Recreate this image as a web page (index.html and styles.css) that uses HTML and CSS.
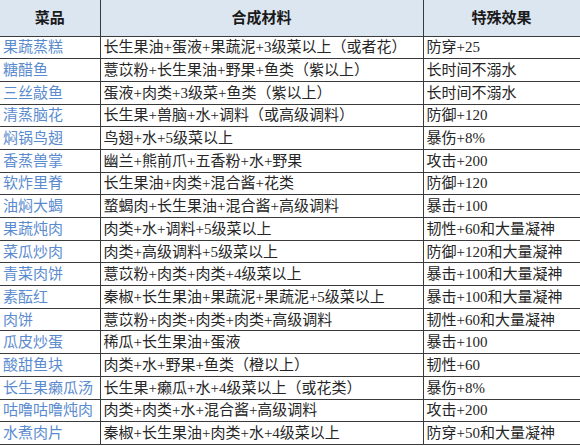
FILE: index.html
```html
<!DOCTYPE html>
<html lang="zh">
<head>
<meta charset="utf-8">
<link rel="stylesheet" href="styles.css">
</head>
<body>
<table class="dishes">
  <colgroup>
    <col class="c-name">
    <col class="c-mat">
    <col class="c-eff">
  </colgroup>
  <thead>
    <tr><th>菜品</th><th>合成材料</th><th>特殊效果</th></tr>
  </thead>
  <tbody>
    <tr><td class="name">果蔬蒸糕</td><td>长生果油+蛋液+果蔬泥+3级菜以上（或者花）</td><td>防穿+25</td></tr>
    <tr><td class="name">糖醋鱼</td><td>薏苡粉+长生果油+野果+鱼类（紫以上）</td><td>长时间不溺水</td></tr>
    <tr><td class="name">三丝敲鱼</td><td>蛋液+肉类+3级菜+鱼类（紫以上）</td><td>长时间不溺水</td></tr>
    <tr><td class="name">清蒸脑花</td><td>长生果+兽脑+水+调料（或高级调料）</td><td>防御+120</td></tr>
    <tr><td class="name">焖锅鸟翅</td><td>鸟翅+水+5级菜以上</td><td>暴伤+8%</td></tr>
    <tr><td class="name">香蒸兽掌</td><td>幽兰+熊前爪+五香粉+水+野果</td><td>攻击+200</td></tr>
    <tr><td class="name">软炸里脊</td><td>长生果油+肉类+混合酱+花类</td><td>防御+120</td></tr>
    <tr><td class="name">油焖大蝎</td><td>蝥蝎肉+长生果油+混合酱+高级调料</td><td>暴击+100</td></tr>
    <tr><td class="name">果蔬炖肉</td><td>肉类+水+调料+5级菜以上</td><td>韧性+60和大量凝神</td></tr>
    <tr><td class="name">菜瓜炒肉</td><td>肉类+高级调料+5级菜以上</td><td>防御+120和大量凝神</td></tr>
    <tr><td class="name">青菜肉饼</td><td>薏苡粉+肉类+肉类+4级菜以上</td><td>暴击+100和大量凝神</td></tr>
    <tr><td class="name">素酝红</td><td>秦椒+长生果油+果蔬泥+果蔬泥+5级菜以上</td><td>暴击+100和大量凝神</td></tr>
    <tr><td class="name">肉饼</td><td>薏苡粉+肉类+肉类+肉类+高级调料</td><td>韧性+60和大量凝神</td></tr>
    <tr><td class="name">瓜皮炒蛋</td><td>稀瓜+长生果油+蛋液</td><td>暴击+100</td></tr>
    <tr><td class="name">酸甜鱼块</td><td>肉类+水+野果+鱼类（橙以上）</td><td>韧性+60</td></tr>
    <tr><td class="name">长生果癞瓜汤</td><td>长生果+癞瓜+水+4级菜以上（或花类）</td><td>暴伤+8%</td></tr>
    <tr><td class="name">咕噜咕噜炖肉</td><td>肉类+肉类+水+混合酱+高级调料</td><td>攻击+200</td></tr>
    <tr><td class="name">水煮肉片</td><td>秦椒+长生果油+肉类+水+4级菜以上</td><td>防穿+50和大量凝神</td></tr>
  </tbody>
</table>
</body>
</html>
```

FILE: styles.css
```css
html, body {
  margin: 0;
  padding: 0;
  background: #ffffff;
}

.dishes {
  border-collapse: collapse;
  table-layout: fixed;
  width: 580px;
  font-family: "Liberation Serif", "Noto Sans CJK SC", serif;
  font-size: 15px;
  color: #262626;
}

.c-name { width: 100px; }
.c-mat { width: 323px; }
.c-eff { width: 157px; }

.dishes th,
.dishes td {
  border: 1px solid #3a3a3a;
  padding: 0 3px;
  white-space: nowrap;
  overflow: hidden;
  line-height: 20px;
}

.dishes tr > :first-child { border-left: none; }
.dishes thead th { border-top: none; }

.dishes thead tr { height: 36px; }
.dishes tbody tr { height: 22.7px; }

.dishes th {
  background: #dce6f1;
  font-weight: bold;
  text-align: center;
  color: #1a1a1a;
}

.dishes td {
  text-align: left;
}

.dishes td.name {
  color: #5b8bcf;
}
```
